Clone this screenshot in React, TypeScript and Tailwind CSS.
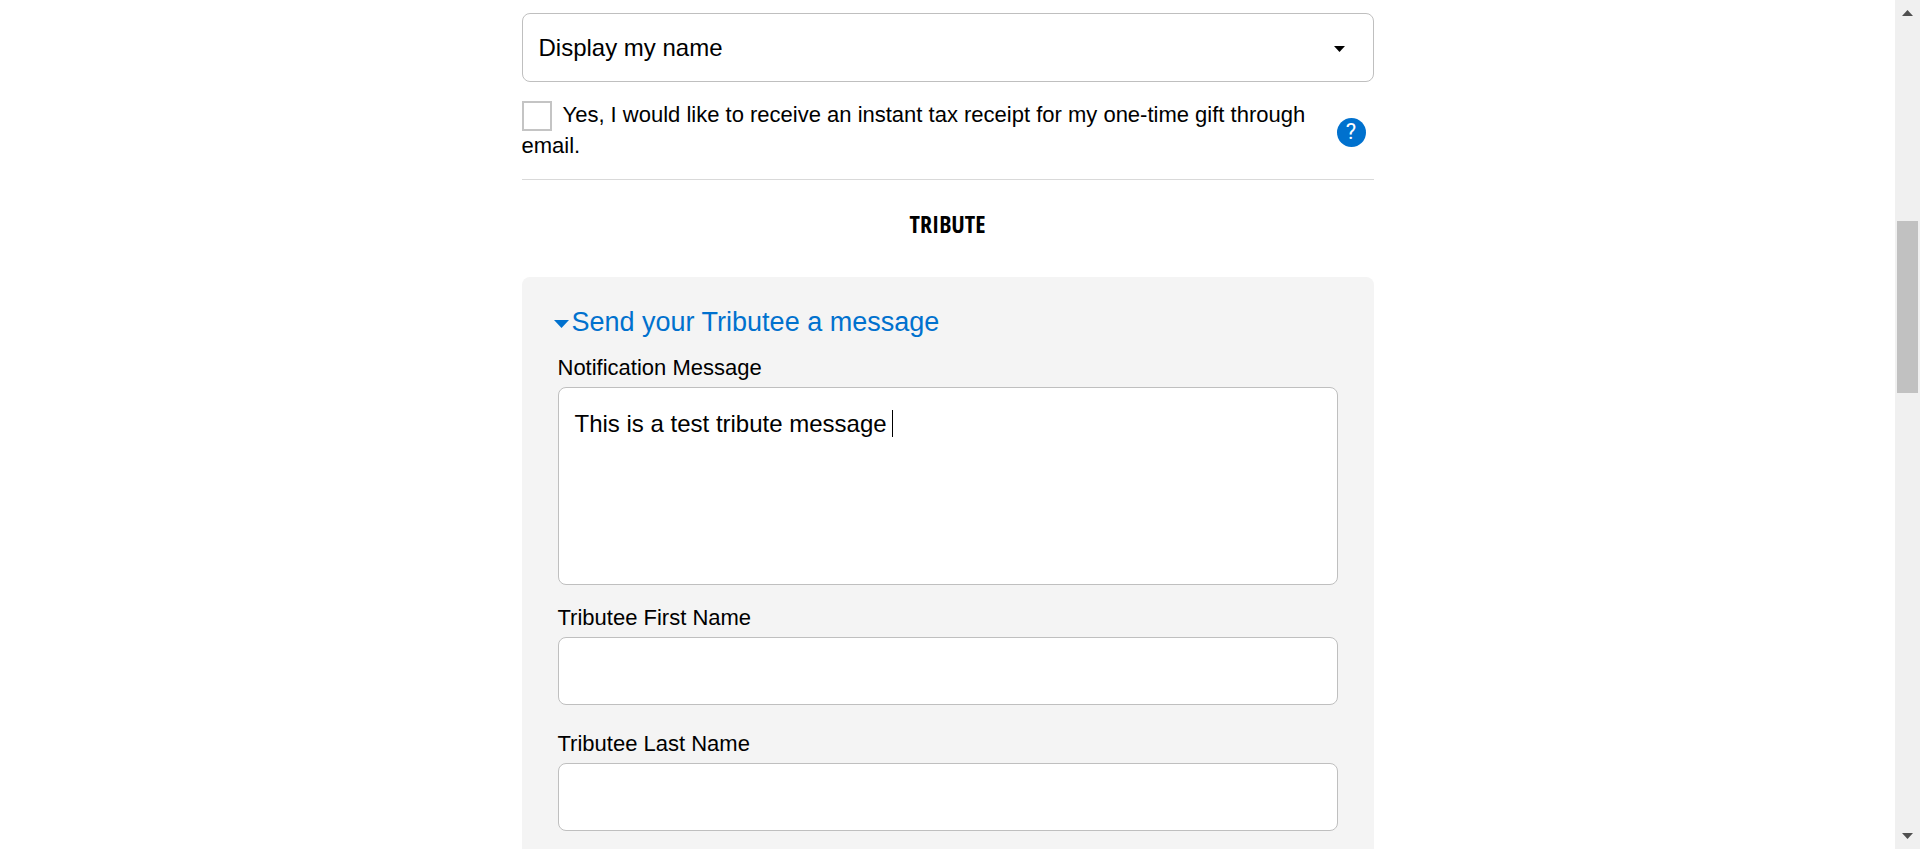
import { useState } from "react";

const fieldClass =
  "block w-full rounded-lg border border-[#bfbfbf] bg-white px-4 text-[24px] leading-[30px] text-black outline-none";
const labelClass = "block text-[22px] leading-[30px]";

function TextField({ id, label }: { id: string; label: string }) {
  const [value, setValue] = useState("");
  return (
    <div>
      <label htmlFor={id} className={labelClass}>
        {label}
      </label>
      <input
        id={id}
        type="text"
        value={value}
        onChange={(e) => setValue(e.target.value)}
        className={`${fieldClass} mt-1 h-[68px]`}
      />
    </div>
  );
}

function ScrollTrack() {
  return (
    <div aria-hidden="true" className="flex w-[25px] shrink-0 flex-col items-center bg-[#f0f0f0]">
      <svg width="11" height="6" viewBox="0 0 11 6" className="mt-[10px] shrink-0">
        <path d="M5.5 0L11 6H0z" fill="#505050" />
      </svg>
      <div className="flex w-full grow flex-col px-[2px] pt-1">
        <div className="grow-[201]" />
        <div className="grow-[172] bg-[#c1c1c1]" />
        <div className="grow-[440]" />
      </div>
      <svg width="11" height="6" viewBox="0 0 11 6" className="mb-[10px] shrink-0">
        <path d="M0 0H11L5.5 6z" fill="#505050" />
      </svg>
    </div>
  );
}

export default function App() {
  const [message, setMessage] = useState("This is a test tribute message ");
  return (
    <div className="flex h-screen overflow-hidden bg-white font-['Liberation_Sans',Arial,sans-serif] text-black">
      <main className="min-w-0 grow overflow-hidden pt-[13px]">
        <form className="mx-auto max-w-[852px]">
          <div className="relative">
            <select aria-label="Name display" className={`${fieldClass} h-[69px] appearance-none`}>
              <option>Display my name</option>
            </select>
            <svg
              aria-hidden="true"
              width="11"
              height="6"
              viewBox="0 0 11 6"
              className="pointer-events-none absolute top-[33px] right-[29px]"
            >
              <path d="M0 0H11L5.5 6z" fill="#000" />
            </svg>
          </div>

          <div className="flex items-center border-b border-[#d9d9d9] pt-[18px] pb-[18px]">
            <label className="grow text-[22px] leading-[30px]">
              <input
                type="checkbox"
                className="mr-[11px] inline-block size-[30px] appearance-none border-2 border-[#c4c4c4] bg-white align-middle"
              />
              Yes, I would like to receive an instant tax receipt for my one-time gift through email.
            </label>
            <button
              type="button"
              aria-label="Help"
              className="mt-[3px] mr-2 flex size-[29px] shrink-0 items-center justify-center rounded-full bg-[#0071ce] font-[Roboto,sans-serif] text-[22px] leading-none text-white"
            >
              ?
            </button>
          </div>

          <h2 className="pt-[29px] pb-[38px] text-center font-['Noto_Sans_ExtraCondensed','Open_Sans_Condensed','Roboto_Condensed',sans-serif] text-[24px] leading-[30px] font-extrabold">
            TRIBUTE
          </h2>

          <section className="rounded-lg bg-[#f4f4f4] px-9 pt-[29px] pb-9">
            <button type="button" className="-ml-1 flex items-center text-[27px] leading-8 text-[#0071ce]">
              <svg aria-hidden="true" width="15" height="8" viewBox="0 0 15 8" className="mt-[3px] mr-[3px]">
                <path d="M0 0H15L7.5 8z" fill="currentColor" />
              </svg>
              Send your Tributee a message
            </button>

            <label htmlFor="message" className={`${labelClass} mt-[15px]`}>
              Notification Message
            </label>
            <div className="relative mt-1">
              <textarea
                id="message"
                value={message}
                onChange={(e) => setMessage(e.target.value)}
                className={`${fieldClass} h-[198px] resize-none py-[21px]`}
              />
              <span aria-hidden="true" className="absolute top-[23px] left-[334px] h-[27px] w-px bg-black" />
            </div>

            <div className="mt-[18px] flex flex-col gap-6">
              <TextField id="first-name" label="Tributee First Name" />
              <TextField id="last-name" label="Tributee Last Name" />
            </div>
          </section>
        </form>
      </main>
      <ScrollTrack />
    </div>
  );
}
